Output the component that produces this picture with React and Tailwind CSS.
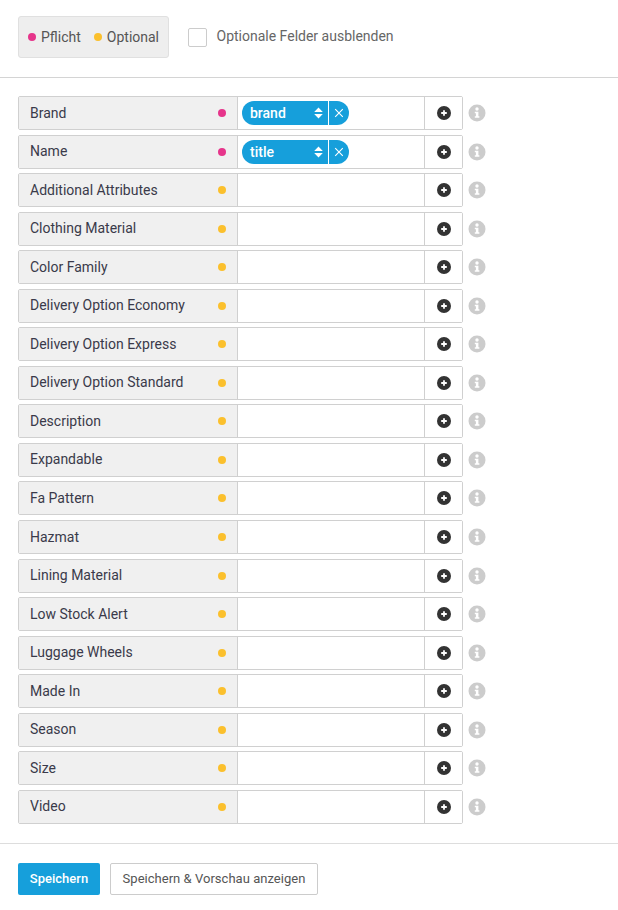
import React from 'react';

const fields = [
  { name: 'Brand', required: true, tag: 'brand' },
  { name: 'Name', required: true, tag: 'title' },
  { name: 'Additional Attributes' },
  { name: 'Clothing Material' },
  { name: 'Color Family' },
  { name: 'Delivery Option Economy' },
  { name: 'Delivery Option Express' },
  { name: 'Delivery Option Standard' },
  { name: 'Description' },
  { name: 'Expandable' },
  { name: 'Fa Pattern' },
  { name: 'Hazmat' },
  { name: 'Lining Material' },
  { name: 'Low Stock Alert' },
  { name: 'Luggage Wheels' },
  { name: 'Made In' },
  { name: 'Season' },
  { name: 'Size' },
  { name: 'Video' },
];

const Tag = ({ label }) => (
  <div className="ml-[4px] flex h-[24px] w-[107px] items-center overflow-hidden rounded-full bg-[#169fdb] text-white">
    <span className="flex-1 pl-[8px] text-[14px] font-medium leading-none">{label}</span>
    <svg width="9" height="12" viewBox="0 0 9 12" className="mr-[5px]">
      <path d="M4.5 0.5 L8.8 5 H0.2 Z M4.5 11.5 L8.8 7 H0.2 Z" fill="white" />
    </svg>
    <div className="flex h-full w-[21px] items-center justify-center border-l border-white">
      <svg width="10" height="10" viewBox="0 0 10 10" className="mr-[1px]">
        <path d="M1.2 1.2 L8.8 8.8 M8.8 1.2 L1.2 8.8" stroke="white" strokeWidth="1.1" fill="none" />
      </svg>
    </div>
  </div>
);

const PlusIcon = () => (
  <svg width="14" height="14" viewBox="0 0 14 14">
    <circle cx="7" cy="7" r="7" fill="#333333" />
    <path d="M7 4.2 V9.8 M4.2 7 H9.8" stroke="white" strokeWidth="1.8" />
  </svg>
);

const InfoIcon = () => (
  <svg width="18" height="18" viewBox="0 0 18 18">
    <circle cx="9" cy="9" r="8.5" fill="#cccccc" />
    <circle cx="9" cy="5" r="1.7" fill="white" />
    <path d="M6.8 7.7 H10.4 V12.2 H11.4 V13.8 H6.8 V12.2 H7.9 V9.3 H6.8 Z" fill="white" />
  </svg>
);

const Row = ({ field }) => (
  <div className="flex items-center">
    <div className="flex h-[34px] w-[445px] rounded-[2px] border border-[#d0d0d0]">
      <div className="flex w-[219px] items-center justify-between border-r border-[#d0d0d0] bg-[#f0f0f0] pl-[11px] pr-[11px] text-[14px] text-[#3a3a4a]">
        <span>{field.name}</span>
        <span className={`h-[8px] w-[8px] rounded-full ${field.required ? 'bg-[#e6358b]' : 'bg-[#fbc02d]'}`} />
      </div>
      <div className="flex w-[187px] items-center border-r border-[#d0d0d0] bg-white">
        {field.tag && <Tag label={field.tag} />}
      </div>
      <div className="flex flex-1 items-center justify-center bg-white">
        <PlusIcon />
      </div>
    </div>
    <div className="ml-[5px] flex">
      <InfoIcon />
    </div>
  </div>
);

export default function App() {
  return (
    <div className="min-h-[910px] bg-white font-['Roboto',sans-serif] text-[14px]">
      {/* Header */}
      <div className="flex h-[78px] items-start border-b border-[#d4d4d4] pl-[18px] pt-[16px]">
        <div className="flex h-[42px] w-[151px] items-center rounded-[3px] border border-[#e0e0e0] bg-[#eeeeee] pl-[9px] text-[#555555]">
          <span className="h-[8px] w-[8px] rounded-full bg-[#e6358b]" />
          <span className="ml-[5px]">Pflicht</span>
          <span className="ml-[13px] h-[8px] w-[8px] rounded-full bg-[#fbc02d]" />
          <span className="ml-[5px]">Optional</span>
        </div>
        <div className="ml-[19px] mt-[12px] h-[19px] w-[19px] rounded-[2px] border border-[#cccccc] bg-white" />
        <span className="ml-[9.5px] mt-[10px] text-[#666666]">Optionale Felder ausblenden</span>
      </div>

      {/* Field rows */}
      <div className="flex flex-col gap-[4.55px] pl-[18px] pt-[18px]">
        {fields.map((f) => (
          <Row key={f.name} field={f} />
        ))}
      </div>

      {/* Footer */}
      <div className="mt-[19px] flex gap-[10px] border-t border-[#dddddd] pl-[18px] pt-[19px]">
        <button className="h-[32px] w-[82px] rounded-[2px] bg-[#169fdb] text-[13px] font-medium text-white">
          Speichern
        </button>
        <button className="h-[32px] w-[208px] rounded-[2px] border border-[#cccccc] bg-white text-[13px] tracking-[0.03px] text-[#555555]">
          Speichern &amp; Vorschau anzeigen
        </button>
      </div>
    </div>
  );
}
